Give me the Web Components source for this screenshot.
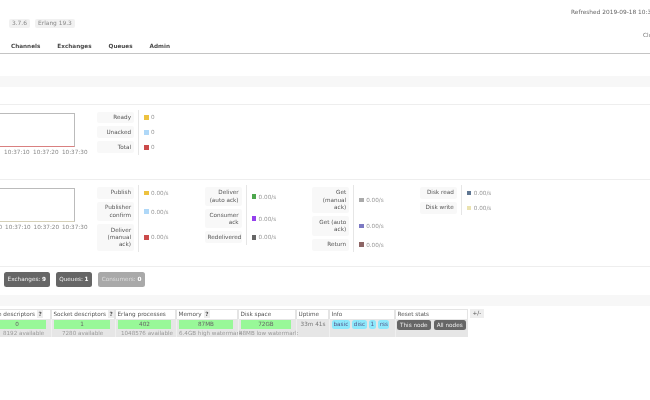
<!DOCTYPE html>
<html>
<head>
<meta charset="utf-8">
<style>
  html, body { margin: 0; height: 100%; overflow: hidden; background: #fff; }
</style>
</head>
<body>
<rmq-page>
  <rmq-header></rmq-header>
  <rmq-nav></rmq-nav>
  <rmq-bar style="margin-top:22px"></rmq-bar>

  <rmq-charts style="margin-top:17px;padding-bottom:24.5px">
    <rmq-chart slot="chart" line="#d98080" gap="3.4" times="10:37:10 10:37:20 10:37:30"></rmq-chart>
    <rmq-legend>
      <rmq-stat label="Ready" color="#edc240" value="0"></rmq-stat>
      <rmq-stat label="Unacked" color="#afd8f8" value="0"></rmq-stat>
      <rmq-stat label="Total" color="#cb4b4b" value="0"></rmq-stat>
    </rmq-legend>
  </rmq-charts>

  <rmq-charts style="padding-bottom:13.5px">
    <rmq-chart slot="chart" line="#d5d0b8" gap="2.9" times="10:37:00 10:37:10 10:37:20 10:37:30"></rmq-chart>
    <rmq-legend>
      <rmq-stat label="Publish" color="#edc240" value="0.00/s"></rmq-stat>
      <rmq-stat label="Publisher confirm" color="#afd8f8" value="0.00/s"></rmq-stat>
      <rmq-stat label="Deliver (manual ack)" color="#cb4b4b" value="0.00/s"></rmq-stat>
    </rmq-legend>
    <rmq-legend>
      <rmq-stat label="Deliver (auto ack)" color="#4da74d" value="0.00/s"></rmq-stat>
      <rmq-stat label="Consumer ack" color="#9440ed" value="0.00/s"></rmq-stat>
      <rmq-stat label="Redelivered" color="#666666" value="0.00/s"></rmq-stat>
    </rmq-legend>
    <rmq-legend>
      <rmq-stat label="Get (manual ack)" color="#aaaaaa" value="0.00/s"></rmq-stat>
      <rmq-stat label="Get (auto ack)" color="#7c79c3" value="0.00/s"></rmq-stat>
      <rmq-stat label="Return" color="#8d6565" value="0.00/s"></rmq-stat>
    </rmq-legend>
    <rmq-legend>
      <rmq-stat label="Disk read" color="#5f7692" value="0.00/s"></rmq-stat>
      <rmq-stat label="Disk write" color="#ebe3b0" value="0.00/s"></rmq-stat>
    </rmq-legend>
  </rmq-charts>

  <rmq-counts>
    <rmq-count label="Exchanges:" value="9"></rmq-count>
    <rmq-count label="Queues:" value="1"></rmq-count>
    <rmq-count label="Consumers:" value="0" muted></rmq-count>
  </rmq-counts>

  <rmq-bar style="margin-top:8px"></rmq-bar>
  <rmq-nodes></rmq-nodes>
</rmq-page>

<script>
// small helper: a class that stamps html into an open shadow root
function define(name, render) {
  customElements.define(name, class extends HTMLElement {
    constructor() {
      super();
      this.attachShadow({ mode: 'open' });
    }
    connectedCallback() {
      this.shadowRoot.innerHTML = render(this);
    }
  });
}

// the reference is scrolled 100px sideways, so the page hangs off the left edge
define('rmq-page', () => `
  <style>
    :host {
      display: block;
      width: 850px;
      margin-left: -100px;
      font-family: "DejaVu Sans", Verdana, sans-serif;
      font-size: 5.7px;
      color: #555;
      filter: blur(0.35px);
    }
  </style>
  <slot></slot>`);

define('rmq-header', () => `
  <style>
    :host { display: flex; height: 42px; }
    .badges { display: flex; gap: 5px; padding: 19px 0 0 109px; align-items: flex-start; font-size: 5.9px; }
    .badge {
      background: #f1f1f1;
      color: #888;
      border-radius: 2px;
      height: 9px;
      line-height: 9px;
      padding: 0 3px;
    }
    .info { margin-left: auto; width: 179px; white-space: nowrap; color: #666; padding-top: 7.5px; }
    .cluster { margin: 15.5px 0 0 72px; line-height: 8px; color: #777; }
    .refresh { line-height: 8px; font-size: 5.85px; }
  </style>
  <div class="badges"><span class="badge">3.7.6</span><span class="badge">Erlang 19.3</span></div>
  <div class="info">
    <div class="refresh">Refreshed 2019-09-18 10:37:36</div>
    <div class="cluster">Cluster rabbit@node1</div>
  </div>`);

define('rmq-nav', () => `
  <style>
    :host {
      display: flex;
      height: 11px;
      padding-left: 111px;
      border-bottom: 1px solid #c4c4c4;
      line-height: 8px;
      font-weight: bold;
      color: #484848;
    }
    span { margin-right: 17px; }
  </style>
  <span>Channels</span><span>Exchanges</span><span>Queues</span><span>Admin</span>`);

define('rmq-bar', () => `
  <style>
    :host { display: block; height: 11px; background: #f7f7f7; }
  </style>`);

define('rmq-charts', () => `
  <style>
    :host {
      display: flex;
      border-top: 1px solid #eee;
      padding-left: 197px;
      padding-top: 5px;
      position: relative;
    }
    .chart { position: absolute; left: 54.5px; top: 8px; }
    .legends { display: flex; }
  </style>
  <div class="chart"><slot name="chart"></slot></div>
  <div class="legends"><slot></slot></div>`);

define('rmq-chart', el => `
  <style>
    :host { display: block; width: 120px; }
    .plot {
      box-sizing: border-box;
      height: 34px;
      border: 1px solid #bbb;
      border-bottom: 1.5px solid ${el.getAttribute('line')};
    }
    .times {
      display: flex;
      justify-content: flex-end;
      gap: ${el.getAttribute('gap')}px;
      margin: 1px -13px 0 0;
      height: 8px;
      line-height: 8px;
      font-size: 5.7px;
      color: #888;
      white-space: nowrap;
    }
  </style>
  <div class="plot"></div>
  <div class="times">${el.getAttribute('times').split(' ').map(t => `<span>${t}</span>`).join('')}</div>`);

define('rmq-legend', () => `
  <style>
    :host { display: block; width: 107.6px; }
  </style>
  <slot></slot>`);

define('rmq-stat', el => `
  <style>
    :host { display: flex; }
    .label {
      box-sizing: border-box;
      width: 37px;
      margin: 1.5px 0;
      padding: 2.4px 3px;
      background: #f8f8f8;
      border-radius: 2px;
      line-height: 7.2px;
      text-align: right;
      color: #555;
    }
    .value {
      display: flex;
      align-items: center;
      gap: 2.5px;
      margin-left: 4px;
      padding-left: 5px;
      border-left: 1px solid #e6e6e6;
      color: #999;
    }
    i { width: 4.5px; height: 4.5px; background: ${el.getAttribute('color')}; }
  </style>
  <div class="label">${el.getAttribute('label')}</div>
  <div class="value"><i></i><span>${el.getAttribute('value')}</span></div>`);

define('rmq-counts', () => `
  <style>
    :host {
      display: flex;
      gap: 6px;
      border-top: 1px solid #eee;
      padding: 5px 0 0 104px;
    }
  </style>
  <slot></slot>`);

define('rmq-count', el => `
  <style>
    :host {
      display: block;
      height: 15px;
      line-height: 15px;
      padding: 0 3.6px;
      border-radius: 2.5px;
      background: ${el.hasAttribute('muted') ? '#a9a9a9' : '#666'};
      color: ${el.hasAttribute('muted') ? '#ddd' : '#eee'};
    }
    b { color: #fff; }
  </style>
  ${el.getAttribute('label')} <b>${el.getAttribute('value')}</b>`);

define('rmq-nodes', () => {
  const col = [
    { w: 66, head: 'File descriptors', headPad: 6, help: 1, bar: '0', sub: '8192 available', subPad: 17 },
    { w: 64, head: 'Socket descriptors', headPad: 1.5, help: 1, bar: '1', sub: '7280 available', subPad: 10 },
    { w: 61, head: 'Erlang processes', headPad: 1.5, bar: '402', sub: '1048576 available', subPad: 5 },
    { w: 62, head: 'Memory', headPad: 1.5, help: 1, bar: '87MB', sub: '6.4GB high watermark', subPad: 2 },
    { w: 58, head: 'Disk space', headPad: 1.5, bar: '72GB', sub: '48MB low watermark', subPad: 0 }
  ];
  const th = col.map(c => `<div class="th" style="width:${c.w}px;padding-left:${c.headPad}px"><span>${c.head}</span>${c.help ? '<em>?</em>' : ''}</div>`).join('');
  const td = col.map(c => `<div class="td" style="width:${c.w}px"><div class="bar">${c.bar}</div><div class="sub" style="padding-left:${c.subPad}px">${c.sub}</div></div>`).join('');
  return `
  <style>
    :host { display: block; margin-top: 3px; padding-left: 85px; white-space: nowrap; }
    .row { display: flex; }
    .body { width: max-content; background: #e6e6e6; }
    .th {
      box-sizing: border-box;
      display: flex;
      gap: 2px;
      align-items: center;
      height: 10px;
      padding: 0 1.5px;
      border: 1px solid #e4e4e4;
      border-width: 1px 1px 0 1px;
      background: #fff;
      color: #555;
      overflow: hidden;
    }
    em { font-style: normal; font-weight: bold; background: #eee; padding: 0 1.5px; font-size: 5.7px; line-height: 8px; }
    .td {
      box-sizing: border-box;
      height: 18px;
      padding-top: 1px;
      border-left: 1px solid #f0f0f0;
      color: #888;
    }
    .bar {
      height: 9px;
      line-height: 9px;
      margin: 0 5px 0 2px;
      background: #98f898;
      text-align: center;
      color: #666;
    }
    .sub { line-height: 8px; font-size: 5.6px; color: #999; }
    .plain { text-align: center; line-height: 9px; color: #777; }
    .pills { display: flex; gap: 2.5px; padding-left: 2px; }
    .pill { height: 9px; line-height: 9px; padding: 0 1.5px; background: #8de8fb; border-radius: 2.5px; color: #558; }
    .btns { display: flex; gap: 3px; padding-left: 1px; }
    .btn { height: 10px; line-height: 10px; padding: 0 3px; background: #666; color: #eee; border-radius: 2.5px; }
    .tog { margin: 0 0 0 2px; height: 9px; line-height: 9px; padding: 0 2.5px; background: #eee; color: #555; }
  </style>
  <div class="row">
    ${th}
    <div class="th" style="width:33px"><span>Uptime</span></div>
    <div class="th" style="width:66px"><span>Info</span></div>
    <div class="th" style="width:73px"><span>Reset stats</span></div>
    <div class="tog">+/-</div>
  </div>
  <div class="row body">
    ${td}
    <div class="td" style="width:33px"><div class="plain">33m 41s</div></div>
    <div class="td" style="width:66px"><div class="pills"><span class="pill">basic</span><span class="pill">disc</span><span class="pill">1</span><span class="pill">rss</span></div></div>
    <div class="td" style="width:73px"><div class="btns"><span class="btn">This node</span><span class="btn">All nodes</span></div></div>
  </div>`;
});
</script>
</body>
</html>
